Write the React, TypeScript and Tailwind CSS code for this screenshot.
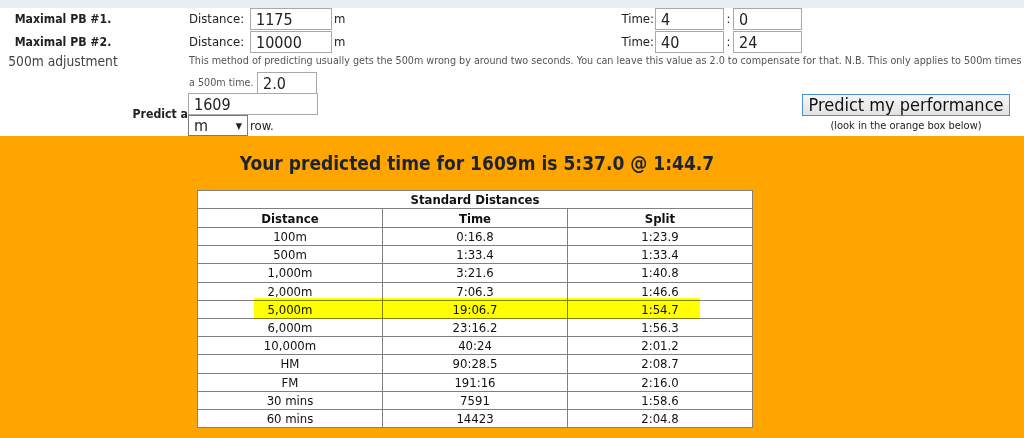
import React from 'react';

const rows = [
  ['100m', '0:16.8', '1:23.9'],
  ['500m', '1:33.4', '1:33.4'],
  ['1,000m', '3:21.6', '1:40.8'],
  ['2,000m', '7:06.3', '1:46.6'],
  ['5,000m', '19:06.7', '1:54.7'],
  ['6,000m', '23:16.2', '1:56.3'],
  ['10,000m', '40:24', '2:01.2'],
  ['HM', '90:28.5', '2:08.7'],
  ['FM', '191:16', '2:16.0'],
  ['30 mins', '7591', '1:58.6'],
  ['60 mins', '14423', '2:04.8'],
];

const inputCls =
  'h-[22px] border border-[#a9a9a9] bg-white px-[5px] text-[16px] leading-none text-[#222] outline-none';

const App = () => {
  return (
    <div className="min-h-screen w-[1024px] h-[438px] overflow-hidden bg-white font-['DejaVu_Sans_Condensed','DejaVu_Sans',sans-serif] text-[#222]">
      {/* top strip */}
      <div className="h-[8px] bg-[#e9eef1]" />

      {/* form */}
      <div className="h-[128px] text-[13px]">
        {/* PB rows */}
        {[
          { label: 'Maximal PB #1.', dist: '1175', min: '4', sec: '0' },
          { label: 'Maximal PB #2.', dist: '10000', min: '40', sec: '24' },
        ].map((pb, i) => (
          <div key={pb.label} className={`flex items-center h-[22px] ${i === 1 ? 'mt-[1px]' : ''}`}>
            <div className="w-[126px] shrink-0 text-center text-[12.2px] font-bold">{pb.label}</div>
            <div className="w-[63px] shrink-0" />
            <div className="flex items-center w-[330px] shrink-0">
              <span className="w-[61px]">Distance:</span>
              <input className={`${inputCls} w-[82px]`} defaultValue={pb.dist} readOnly />
              <span className="ml-[2px]">m</span>
            </div>
            <div className="w-[136px] shrink-0 text-right pr-[1px]">Time:</div>
            <input className={`${inputCls} w-[69px]`} defaultValue={pb.min} readOnly />
            <span className="w-[9px] text-center">:</span>
            <input className={`${inputCls} w-[69px]`} defaultValue={pb.sec} readOnly />
          </div>
        ))}

        {/* 500m adjustment */}
        <div className="flex h-[40px]">
          <div className="w-[126px] shrink-0 text-center text-[13.7px] leading-[16px] text-[#444] whitespace-nowrap">500m adjustment</div>
          <div className="w-[63px] shrink-0" />
          <div className="min-w-0 flex-1 text-[10.7px] text-[#555]">
            <div className="h-[16px] leading-[16px] whitespace-nowrap">
              This method of predicting usually gets the 500m wrong by around two seconds. You can leave this value as 2.0 to compensate for that. N.B. This only applies to 500m times
            </div>
            <div className="mt-[3px] flex items-center">
              <span className="w-[68px]">a 500m time.</span>
              <input className={`${inputCls} w-[60px] h-[21px]`} defaultValue="2.0" readOnly />
            </div>
          </div>
        </div>

        {/* predict row */}
        <div className="flex h-[43px]">
          <div className="w-[188px] shrink-0 flex items-center justify-end text-[12.2px] font-bold">Predict a</div>
          <div className="w-[614px] shrink-0">
            <input className={`${inputCls} block w-[130px] h-[21px]`} defaultValue="1609" readOnly />
            <div className="flex items-center">
              <div className="relative h-[21px] w-[60px] border border-[#7a7a7a] bg-white px-[5px] text-[16px] leading-[20px]">
                m
                <span className="absolute right-[5px] top-0 text-[9px] leading-[20px]">▼</span>
              </div>
              <span className="ml-[2px]">row.</span>
            </div>
          </div>
          <div className="w-[208px] shrink-0 flex flex-col items-center">
            <button className="mt-[1px] h-[22px] w-[208px] border border-[#4a90d9] bg-gradient-to-b from-[#f6f6f6] to-[#e2e2e2] text-[18px] leading-none text-[#111]">
              Predict my performance
            </button>
            <div className="mt-[3px] text-[11px] leading-[14px] text-[#222]">(look in the orange box below)</div>
          </div>
        </div>
      </div>

      {/* orange results */}
      <div className="h-[302px] bg-[#ffa500] pt-[14px]">
        <h2 className="w-[954px] text-center text-[19px] leading-[26px] font-bold text-[#1c2333]">
          Your predicted time for 1609m is 5:37.0 @ 1:44.7
        </h2>
        <div className="relative ml-[197px] mt-[14px] w-[556px]">
          <table className="w-full table-fixed border-collapse border border-[#0d1830] bg-white text-[13px] text-[#111]">
            <thead>
              <tr className="h-[18px]">
                <th colSpan={3} className="border border-[#808080] font-bold leading-[17px]">
                  Standard Distances
                </th>
              </tr>
              <tr className="h-[19px]">
                {['Distance', 'Time', 'Split'].map((h) => (
                  <th key={h} className="border border-[#808080] font-bold leading-[17px]">
                    {h}
                  </th>
                ))}
              </tr>
            </thead>
            <tbody>
              {rows.map((r) => (
                <tr key={r[0]} className="h-[18.2px]">
                  {r.map((c, j) => (
                    <td key={j} className="border border-[#808080] text-center leading-[17px]">
                      {c}
                    </td>
                  ))}
                </tr>
              ))}
            </tbody>
          </table>
          {/* highlighter mark over the 5,000m row */}
          <div className="pointer-events-none absolute left-[57px] top-[108px] h-[21px] w-[446px] bg-[#ffff00] mix-blend-multiply" />
        </div>
      </div>
    </div>
  );
};

export default App;
